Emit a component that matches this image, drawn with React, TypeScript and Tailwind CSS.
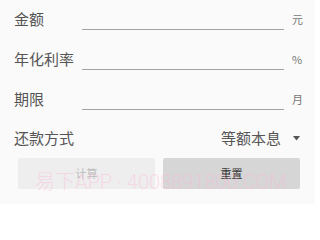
const fieldRows = [
  { label: "金额", unit: "元" },
  { label: "年化利率", unit: "%" },
  { label: "期限", unit: "月" },
];

const App = () => {
  return (
    <div
      className="relative w-[315px] h-[204px] overflow-hidden bg-[#fafafa]"
      style={{ fontFamily: '"Noto Sans CJK SC", "Noto Sans", sans-serif' }}
    >
      {/* Input rows */}
      {fieldRows.map((row) => (
        <div key={row.label} className="flex h-[40px]">
          <div className="w-[82px] pl-[14px] pt-[9px] text-[15px] leading-[20px] text-[#555555]">
            {row.label}
          </div>
          <div className="w-[202px] h-[30px] border-b border-[#a3a3a3]" />
          <div className="pl-[8px] pt-[12px] text-[11px] leading-[14px] text-[#777777]">
            {row.unit}
          </div>
        </div>
      ))}

      {/* Repayment method */}
      <div className="flex h-[38px] items-start pt-[8px]">
        <div className="pl-[14px] text-[15px] leading-[20px] text-[#555555]">还款方式</div>
        <div className="ml-auto flex items-center pr-[15px]">
          <span className="text-[15px] leading-[20px] text-[#555555]">等额本息</span>
          <svg className="ml-[12px]" width="7" height="5" viewBox="0 0 7 5">
            <path d="M0 0 H7 L3.5 4.5 Z" fill="#555555" />
          </svg>
        </div>
      </div>

      {/* Buttons */}
      <div className="flex gap-[8px] pl-[18px]">
        <button className="w-[137px] h-[31px] rounded-[2px] bg-[#eeeeee] text-[11px] text-[#bdbdbd]">
          计算
        </button>
        <button className="w-[137px] h-[31px] rounded-[2px] bg-[#d6d6d6] text-[11px] text-[#333333]">
          重置
        </button>
      </div>

      {/* Watermark */}
      <div
        className="pointer-events-none absolute left-[35px] top-[170px] text-[20px] leading-[24px] font-light whitespace-nowrap text-[#ffb6d9] opacity-40"
        style={{ fontFamily: 'Roboto, "Noto Sans CJK SC", sans-serif' }}
      >
        易下APP · 4008891800.COM
      </div>
    </div>
  );
};

export default App;
